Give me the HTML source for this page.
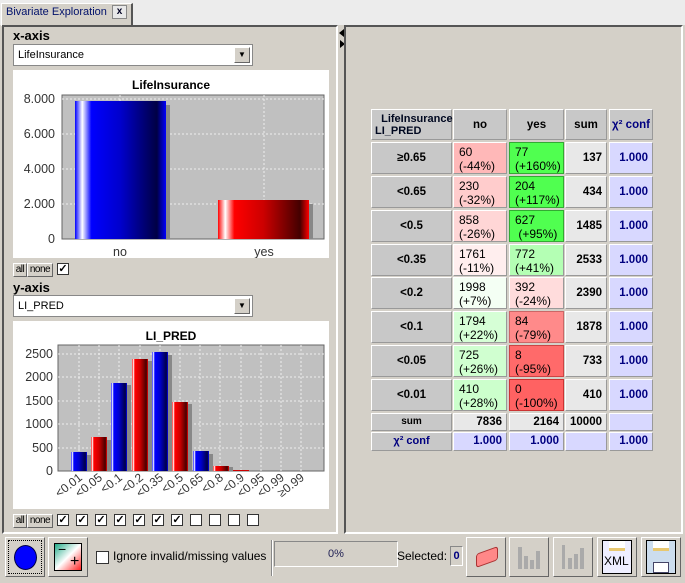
<!DOCTYPE html><html><head><meta charset="utf-8"><style>
*{box-sizing:border-box;margin:0;padding:0}
body{width:685px;height:583px;background:#d4d0c8;font-family:"Liberation Sans",sans-serif;font-size:11px;position:relative;overflow:hidden}
.a{position:absolute}
.c{position:absolute;height:32px;border:1px solid #fff;border-right-color:#999;border-bottom-color:#999;font-size:11.5px}
.h{background:#c8c8c8;font-weight:bold;text-align:center;line-height:30px}
.v{padding:2px 0 0 5px;line-height:14px;font-size:12px}
.s{background:#e8e8e8;font-weight:bold;text-align:right;padding-right:4px;line-height:30px}
.x{background:#d8d8ff;color:#000080;font-weight:bold;text-align:right;padding-right:4px;line-height:30px}
.btn{position:absolute;top:537px;width:40px;height:40px;border:1px solid #fff;border-right-color:#666;border-bottom-color:#666;background:#d4d0c8}
.cb{position:absolute;width:12px;height:12px;border:1px solid #333;background:#fff;font-size:11px;line-height:10px;text-align:center;font-weight:bold}
.sel{position:absolute;left:13px;width:240px;height:22px;background:#fff;border:1px solid #888;padding:4px 4px;font-size:11px}
.sel b{position:absolute;right:2px;top:2px;width:16px;height:16px;background:#d4d0c8;border:1px solid #fff;border-right-color:#666;border-bottom-color:#666;font-size:8px;text-align:center;line-height:14px;font-weight:normal}
.sb{position:absolute;height:14px;background:#d4d0c8;border:1px solid #fff;border-right-color:#666;border-bottom-color:#666;font-size:10px;line-height:12px;text-align:center;letter-spacing:-0.5px}
</style></head><body>
<div class="a" style="left:0;top:0;width:685px;height:25px;background:#ececec"></div>
<div class="a" style="left:1px;top:3px;width:132px;height:23px;background:#d4d0c8;border:1px solid #fff;border-right:2px solid #555;border-bottom:none"></div>
<div class="a" style="left:6px;top:6px;color:#00106a;font-size:11px">Bivariate Exploration</div>
<div class="a" style="left:112px;top:5px;width:15px;height:14px;border:1px solid #888;background:#e8e8e8;font-size:10px;font-weight:bold;text-align:center;line-height:12px;color:#002">x</div>
<div class="a" style="left:2px;top:25px;width:336px;height:509px;border:2px solid #555;border-right-color:#fff;border-bottom-color:#fff"></div>
<div class="a" style="left:338px;top:25px;width:6px;height:508px;background:#d4d0c8"></div>
<div class="a" style="left:339px;top:29px;width:0;height:0;border:4px solid transparent;border-right:5px solid #000;border-left:none"></div>
<div class="a" style="left:340px;top:40px;width:0;height:0;border:4px solid transparent;border-left:5px solid #000;border-right:none"></div>
<div class="a" style="left:344px;top:25px;width:339px;height:509px;border:2px solid #555;border-right-color:#fff;border-bottom-color:#fff"></div>
<div class="a" style="left:13px;top:28px;font-weight:bold;font-size:13px">x-axis</div>
<div class="sel" style="top:44px">LifeInsurance<b>▼</b></div>
<svg class="a" style="left:13px;top:70px" width="316" height="188" font-family="Liberation Sans,sans-serif">
<defs>
<linearGradient id="gb" x1="0" x2="1"><stop offset="0" stop-color="#00f"/><stop offset=".08" stop-color="#fff"/><stop offset=".18" stop-color="#00f"/><stop offset=".5" stop-color="#00c"/><stop offset=".9" stop-color="#004"/><stop offset="1" stop-color="#00f"/></linearGradient>
<linearGradient id="gr" x1="0" x2="1"><stop offset="0" stop-color="#f00"/><stop offset=".08" stop-color="#fff"/><stop offset=".18" stop-color="#f00"/><stop offset=".5" stop-color="#c00"/><stop offset=".9" stop-color="#400"/><stop offset="1" stop-color="#f00"/></linearGradient>
</defs>
<rect width="316" height="188" fill="#fff"/>
<text x="158" y="19" text-anchor="middle" font-weight="bold" font-size="12">LifeInsurance</text>
<rect x="49" y="25" width="262" height="144" fill="#c0c0c0" stroke="#666"/>
<g stroke="#eee" stroke-dasharray="2,2"><line x1="49" y1="29" x2="311" y2="29"/><line x1="49" y1="64" x2="311" y2="64"/><line x1="49" y1="99" x2="311" y2="99"/><line x1="49" y1="134" x2="311" y2="134"/><line x1="107" y1="25" x2="107" y2="169"/><line x1="251" y1="25" x2="251" y2="169"/></g>
<rect x="66" y="35" width="91" height="134" fill="#888"/><rect x="62" y="31" width="91" height="138" fill="url(#gb)"/>
<rect x="209" y="134" width="91" height="35" fill="#888"/><rect x="205" y="130" width="91" height="39" fill="url(#gr)"/>
<g font-size="12.5" text-anchor="end" fill="#333"><text x="42" y="33">8.000</text><text x="42" y="68">6.000</text><text x="42" y="103">4.000</text><text x="42" y="138">2.000</text><text x="42" y="173">0</text></g>
<g font-size="12.5" text-anchor="middle" fill="#333"><text x="107" y="186">no</text><text x="251" y="186">yes</text></g>
</svg>
<div class="sb" style="left:13px;top:263px;width:14px">all</div><div class="sb" style="left:27px;top:263px;width:26px">none</div>
<div class="cb" style="left:57px;top:263px">✓</div>
<div class="a" style="left:13px;top:280px;font-weight:bold;font-size:13px">y-axis</div>
<div class="sel" style="top:295px">LI_PRED<b>▼</b></div>
<svg class="a" style="left:13px;top:321px" width="316" height="188" font-family="Liberation Sans,sans-serif">
<rect width="316" height="188" fill="#fff"/>
<text x="158" y="19" text-anchor="middle" font-weight="bold" font-size="12">LI_PRED</text>
<rect x="45" y="24" width="266" height="126" fill="#c0c0c0" stroke="#666"/>
<g stroke="#eee" stroke-dasharray="2,2">
<line x1="45" y1="33" x2="311" y2="33"/><line x1="45" y1="56" x2="311" y2="56"/><line x1="45" y1="80" x2="311" y2="80"/><line x1="45" y1="103" x2="311" y2="103"/><line x1="45" y1="127" x2="311" y2="127"/>
<line x1="66" y1="24" x2="66" y2="150"/><line x1="86" y1="24" x2="86" y2="150"/><line x1="106" y1="24" x2="106" y2="150"/><line x1="127" y1="24" x2="127" y2="150"/><line x1="147" y1="24" x2="147" y2="150"/><line x1="167" y1="24" x2="167" y2="150"/><line x1="187" y1="24" x2="187" y2="150"/><line x1="207" y1="24" x2="207" y2="150"/><line x1="228" y1="24" x2="228" y2="150"/><line x1="248" y1="24" x2="248" y2="150"/><line x1="268" y1="24" x2="268" y2="150"/><line x1="288" y1="24" x2="288" y2="150"/></g>
<g fill="#888"><rect x="62" y="134" width="16" height="16"/><rect x="82" y="119" width="16" height="31"/><rect x="102" y="64" width="16" height="86"/><rect x="123" y="40" width="16" height="110"/><rect x="143" y="34" width="16" height="116"/><rect x="163" y="83" width="16" height="67"/><rect x="184" y="133" width="16" height="17"/><rect x="204" y="146" width="16" height="4"/></g>
<rect x="58" y="131" width="16" height="19" fill="url(#gb)"/>
<rect x="78" y="116" width="16" height="34" fill="url(#gr)"/>
<rect x="98" y="62" width="16" height="88" fill="url(#gb)"/>
<rect x="119" y="38" width="16" height="112" fill="url(#gr)"/>
<rect x="139" y="31" width="16" height="119" fill="url(#gb)"/>
<rect x="159" y="81" width="16" height="69" fill="url(#gr)"/>
<rect x="180" y="130" width="16" height="20" fill="url(#gb)"/>
<rect x="200" y="145" width="16" height="5" fill="url(#gr)"/>
<rect x="220" y="149" width="16" height="1" fill="#c00"/>
<g font-size="12.5" text-anchor="end" fill="#333"><text x="40" y="37">2500</text><text x="40" y="60">2000</text><text x="40" y="84">1500</text><text x="40" y="107">1000</text><text x="40" y="131">500</text><text x="40" y="154">0</text></g>
<g font-size="12" text-anchor="end" fill="#333">
<text transform="translate(70,158) rotate(-38)">&lt;0.01</text><text transform="translate(90,158) rotate(-38)">&lt;0.05</text><text transform="translate(110,158) rotate(-38)">&lt;0.1</text><text transform="translate(131,158) rotate(-38)">&lt;0.2</text><text transform="translate(151,158) rotate(-38)">&lt;0.35</text><text transform="translate(171,158) rotate(-38)">&lt;0.5</text><text transform="translate(191,158) rotate(-38)">&lt;0.65</text><text transform="translate(211,158) rotate(-38)">&lt;0.8</text><text transform="translate(232,158) rotate(-38)">&lt;0.9</text><text transform="translate(252,158) rotate(-38)">&lt;0.95</text><text transform="translate(272,158) rotate(-38)">&lt;0.99</text><text transform="translate(292,158) rotate(-38)">≥0.99</text></g>
</svg>
<div class="sb" style="left:13px;top:514px;width:14px">all</div><div class="sb" style="left:27px;top:514px;width:26px">none</div>
<div class="cb" style="left:57px;top:514px">✓</div><div class="cb" style="left:76px;top:514px">✓</div><div class="cb" style="left:95px;top:514px">✓</div><div class="cb" style="left:114px;top:514px">✓</div><div class="cb" style="left:133px;top:514px">✓</div><div class="cb" style="left:152px;top:514px">✓</div><div class="cb" style="left:171px;top:514px">✓</div><div class="cb" style="left:190px;top:514px"></div><div class="cb" style="left:209px;top:514px"></div><div class="cb" style="left:228px;top:514px"></div><div class="cb" style="left:247px;top:514px"></div>
<div class="c h" style="left:371px;top:109px;width:81px;height:31px;line-height:12px;padding-top:3px;text-align:left;padding-left:3px;font-size:11px;color:#000820">&nbsp;&nbsp;LifeInsurance<br>LI_PRED</div>
<div class="c h" style="left:453px;top:109px;width:54px;height:31px">no</div>
<div class="c h" style="left:509px;top:109px;width:55px;height:31px">yes</div>
<div class="c h" style="left:565px;top:109px;width:42px;height:31px">sum</div>
<div class="c h" style="left:609px;top:109px;width:44px;height:31px;color:#000080">χ² conf</div>

<div class="c h" style="left:371px;top:142px;width:81px">≥0.65</div><div class="c v" style="left:453px;top:142px;width:54px;background:#ffb8b8">60<br>(-44%)</div><div class="c v" style="left:509px;top:142px;width:55px;background:#50ff50;border-color:#3a3">77<br>(+160%)</div><div class="c s" style="left:565px;top:142px;width:42px">137</div><div class="c x" style="left:609px;top:142px;width:44px">1.000</div>
<div class="c h" style="left:371px;top:176px;width:81px">&lt;0.65</div><div class="c v" style="left:453px;top:176px;width:54px;background:#ffcccc">230<br>(-32%)</div><div class="c v" style="left:509px;top:176px;width:55px;background:#50ff50;border-color:#3a3">204<br>(+117%)</div><div class="c s" style="left:565px;top:176px;width:42px">434</div><div class="c x" style="left:609px;top:176px;width:44px">1.000</div>
<div class="c h" style="left:371px;top:210px;width:81px">&lt;0.5</div><div class="c v" style="left:453px;top:210px;width:54px;background:#ffd6d6">858<br>(-26%)</div><div class="c v" style="left:509px;top:210px;width:55px;background:#50ff50;border-color:#3a3">627<br>&nbsp;(+95%)</div><div class="c s" style="left:565px;top:210px;width:42px">1485</div><div class="c x" style="left:609px;top:210px;width:44px">1.000</div>
<div class="c h" style="left:371px;top:244px;width:81px">&lt;0.35</div><div class="c v" style="left:453px;top:244px;width:54px;background:#ffeeee">1761<br>(-11%)</div><div class="c v" style="left:509px;top:244px;width:55px;background:#b4ffb4">772<br>(+41%)</div><div class="c s" style="left:565px;top:244px;width:42px">2533</div><div class="c x" style="left:609px;top:244px;width:44px">1.000</div>
<div class="c h" style="left:371px;top:277px;width:81px">&lt;0.2</div><div class="c v" style="left:453px;top:277px;width:54px;background:#f4fff4">1998<br>(+7%)</div><div class="c v" style="left:509px;top:277px;width:55px;background:#ffdcdc">392<br>(-24%)</div><div class="c s" style="left:565px;top:277px;width:42px">2390</div><div class="c x" style="left:609px;top:277px;width:44px">1.000</div>
<div class="c h" style="left:371px;top:311px;width:81px">&lt;0.1</div><div class="c v" style="left:453px;top:311px;width:54px;background:#d6ffd6">1794<br>(+22%)</div><div class="c v" style="left:509px;top:311px;width:55px;background:#ff8a8a;border-color:#c66">84<br>(-79%)</div><div class="c s" style="left:565px;top:311px;width:42px">1878</div><div class="c x" style="left:609px;top:311px;width:44px">1.000</div>
<div class="c h" style="left:371px;top:345px;width:81px">&lt;0.05</div><div class="c v" style="left:453px;top:345px;width:54px;background:#d0ffd0">725<br>(+26%)</div><div class="c v" style="left:509px;top:345px;width:55px;background:#ff6a6a;border-color:#c44">8<br>(-95%)</div><div class="c s" style="left:565px;top:345px;width:42px">733</div><div class="c x" style="left:609px;top:345px;width:44px">1.000</div>
<div class="c h" style="left:371px;top:379px;width:81px">&lt;0.01</div><div class="c v" style="left:453px;top:379px;width:54px;background:#ccffcc">410<br>(+28%)</div><div class="c v" style="left:509px;top:379px;width:55px;background:#ff6262;border-color:#c33">0<br>(-100%)</div><div class="c s" style="left:565px;top:379px;width:42px">410</div><div class="c x" style="left:609px;top:379px;width:44px">1.000</div>
<div class="c h" style="left:371px;top:413px;width:81px;height:18px;line-height:16px;font-size:10px">sum</div><div class="c s" style="left:453px;top:413px;width:54px;height:18px;line-height:16px">7836</div><div class="c s" style="left:509px;top:413px;width:55px;height:18px;line-height:16px">2164</div><div class="c s" style="left:565px;top:413px;width:42px;height:18px;line-height:16px">10000</div><div class="c x" style="left:609px;top:413px;width:44px;height:18px"></div>
<div class="c h" style="left:371px;top:432px;width:81px;height:19px;line-height:17px;font-size:11px;color:#000080">χ² conf</div><div class="c x" style="left:453px;top:432px;width:54px;height:19px;line-height:17px">1.000</div><div class="c x" style="left:509px;top:432px;width:55px;height:19px;line-height:17px">1.000</div><div class="c x" style="left:565px;top:432px;width:42px;height:19px"></div><div class="c x" style="left:609px;top:432px;width:44px;height:19px;line-height:17px">1.000</div>
<div class="btn" style="left:5px;outline:1px dotted #000;outline-offset:-4px"><div class="a" style="left:8px;top:7px;width:23px;height:25px;border-radius:50%;background:#00f;border:1px solid #004"></div></div>
<div class="btn" style="left:48px"><div class="a" style="left:5px;top:5px;width:28px;height:28px;border:1px solid #000;background:linear-gradient(135deg,#2a8 0%,#fff 50%,#f22 100%)"></div><div class="a" style="left:9px;top:3px;font-size:14px">−</div><div class="a" style="left:21px;top:15px;font-size:16px">+</div></div>
<div class="cb" style="left:96px;top:551px;width:13px;height:13px"></div>
<div class="a" style="left:113px;top:549px;font-size:12px">Ignore invalid/missing values</div>
<div class="a" style="left:271px;top:540px;width:2px;height:36px;border-left:1px solid #888;border-right:1px solid #fff"></div>
<div class="a" style="left:274px;top:541px;width:124px;height:26px;border:1px solid #888;border-right-color:#fff;border-bottom-color:#fff;text-align:center;line-height:24px;color:#225">0%</div>
<div class="a" style="left:397px;top:549px;font-size:12px">Selected:</div>
<div class="a" style="left:450px;top:546px;width:13px;height:20px;border:1px solid #888;border-right-color:#fff;border-bottom-color:#fff;font-weight:bold;color:#000080;text-align:center;line-height:18px">0</div>
<div class="btn" style="left:466px"><div class="a" style="left:9px;top:12px;width:22px;height:14px;background:#f88;border:1px solid #a33;border-radius:3px;transform:skewY(-20deg)"></div></div>
<div class="btn" style="left:509px"><svg class="a" style="left:4px;top:4px" width="30" height="30"><rect x="4" y="5" width="4" height="22" fill="#aaa"/><rect x="10" y="14" width="4" height="13" fill="#aaa"/><rect x="16" y="18" width="4" height="9" fill="#aaa"/><rect x="22" y="9" width="4" height="18" fill="#aaa"/></svg></div>
<div class="btn" style="left:553px"><svg class="a" style="left:4px;top:4px" width="30" height="30"><rect x="4" y="3" width="3" height="24" fill="#aaa"/><rect x="10" y="16" width="4" height="11" fill="#aaa"/><rect x="16" y="12" width="4" height="15" fill="#aaa"/><rect x="22" y="6" width="4" height="21" fill="#aaa"/></svg></div>
<div class="btn" style="left:597px"><div class="a" style="left:4px;top:2px;width:30px;height:34px;background:#eef;border:1px solid #000"></div><div class="a" style="left:11px;top:3px;width:16px;height:10px;background:#fff;border-bottom:3px solid #e8c870"></div><div class="a" style="left:6px;top:16px;font-size:12px">XML</div></div>
<div class="btn" style="left:641px"><div class="a" style="left:4px;top:2px;width:30px;height:34px;background:#cde;border:1px solid #000"></div><div class="a" style="left:11px;top:3px;width:16px;height:10px;background:#fff;border-bottom:3px solid #e8c870"></div><div class="a" style="left:11px;top:24px;width:16px;height:11px;background:#fff;border:1px solid #446"></div></div>
</body></html>
